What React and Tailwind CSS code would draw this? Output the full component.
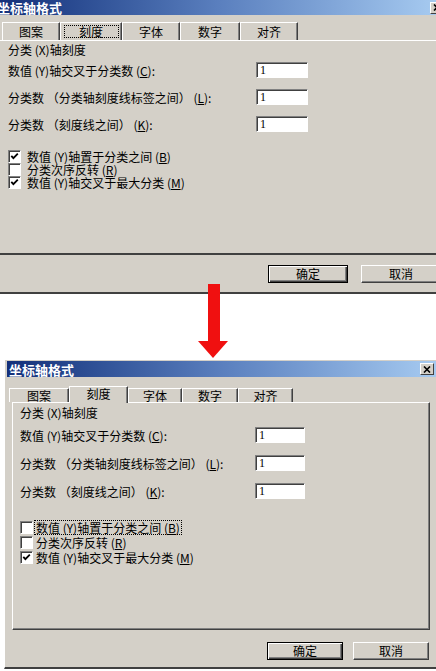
const CJK = "font-['Noto_Sans_CJK_SC',sans-serif]";

function Field({ w }) {
  return (
    <div
      className={`h-[16px] ${w} bg-white border border-t-[#808080] border-l-[#808080] border-b-white border-r-white shadow-[inset_1px_1px_0_#404040] pl-[3px] flex items-center font-['Liberation_Serif',serif] text-[12px] leading-none text-black`}
    >
      1
    </div>
  );
}

function Box({ checked }) {
  return (
    <span className="w-[13px] h-[13px] shrink-0 bg-white border border-t-[#808080] border-l-[#808080] border-b-white border-r-white shadow-[inset_1px_1px_0_#404040] flex items-center justify-center">
      {checked ? (
        <svg width="9" height="9" viewBox="0 0 9 9">
          <path d="M1.3 3.8 L3.4 6.2 L7.8 1.6" stroke="#000" strokeWidth="1.8" fill="none" />
        </svg>
      ) : null}
    </span>
  );
}

function Btn({ children, def, w }) {
  return (
    <div
      className={`h-[18px] ${w} flex items-center justify-center text-[12px] leading-none text-black ${
        def
          ? "border border-black shadow-[inset_1px_1px_0_#fff,inset_-1px_-1px_0_#404040,inset_-2px_-2px_0_#808080]"
          : "border border-t-white border-l-white border-b-[#404040] border-r-[#404040] shadow-[inset_-1px_-1px_0_#808080]"
      }`}
    >
      {children}
    </div>
  );
}

function Close({ extra }) {
  return (
    <div
      className={`w-[14px] h-[12px] shrink-0 bg-[#d4d0c8] border border-t-white border-l-white border-b-[#404040] border-r-[#404040] flex items-center justify-center ${extra}`}
    >
      <svg width="8" height="7" viewBox="0 0 8 7">
        <path d="M1 0.5 L7 6.5 M7 0.5 L1 6.5" stroke="#000" strokeWidth="1.6" />
      </svg>
    </div>
  );
}

// mnemonic label, e.g. 分类次序反转 (R)
function Label({ text, k, colon }) {
  return (
    <span className="inline-block whitespace-nowrap leading-[13px]">
      {text} (<u>{k}</u>){colon ? ":" : ""}
    </span>
  );
}

const rows = [
  ["数值 (Y)轴交叉于分类数", "C"],
  ["分类数 （分类轴刻度线标签之间）", "L"],
  ["分类数 （刻度线之间）", "K"],
];

const topTabs = [
  ["图案", "w-[58px]"],
  ["刻度", "w-[62px]"],
  ["字体", "w-[58px]"],
  ["数字", "w-[60px]"],
  ["对齐", "w-[58px]"],
];

const botTabs = [
  ["图案", "w-[60px]"],
  ["刻度", "w-[59px]"],
  ["字体", "w-[54px]"],
  ["数字", "w-[56px]"],
  ["对齐", "w-[55px]"],
];

function TopDialog() {
  return (
    <div className="h-[294px] bg-[#d4d0c8] flex flex-col overflow-hidden border-b-2 border-b-[#404040]">
      <div className="h-[15px] shrink-0 bg-gradient-to-r from-[#14307a] via-[#5a7fbe] to-[#a6caf0] flex items-center justify-between">
        <span className="-ml-[3px] text-white font-bold text-[13px] leading-none">坐标轴格式</span>
        <Close extra="-mr-[8px]" />
      </div>
      <div className="mt-[7px] h-[18px] flex pl-[2px]">
        {topTabs.map(([t, w], i) => (
          <div
            key={t}
            className={`${w} h-[18px] border-t border-l border-t-white border-l-white border-r border-r-[#404040] shadow-[inset_-1px_0_0_#808080] flex items-center justify-center text-[12px] leading-none`}
          >
            {i === 1 ? (
              <span className="w-[55px] h-[13px] border border-dotted border-black flex items-center justify-center">{t}</span>
            ) : (
              t
            )}
          </div>
        ))}
      </div>
      <div className="h-[215px] shrink-0 border-t border-t-white border-b-2 border-b-[#404040] pl-[8px] text-[12px] text-black">
        <div className="mt-[2px] leading-[14px]">分类 (X)轴刻度</div>
        <div className="mt-[5px] grid grid-cols-[248px_52px] gap-y-[11px]">
          {rows.map(([t, k]) => (
            <div key={k} className="contents">
              <div className="h-[16px] flex items-center leading-none">
                <Label text={t} k={k} colon />
              </div>
              <Field w="w-[52px]" />
            </div>
          ))}
        </div>
        <div className="mt-[18px] flex flex-col">
          <div className="h-[13px] flex items-center gap-[6px] leading-none">
            <Box checked />
            <Label text="数值 (Y)轴置于分类之间" k="B" />
          </div>
          <div className="h-[13px] flex items-center gap-[6px] leading-none">
            <Box />
            <Label text="分类次序反转" k="R" />
          </div>
          <div className="h-[13px] flex items-center gap-[6px] leading-none">
            <Box checked />
            <Label text="数值 (Y)轴交叉于最大分类" k="M" />
          </div>
        </div>
      </div>
      <div className="mt-[10px] flex pl-[268px] gap-[13px]">
        <Btn def w="w-[80px] shrink-0">确定</Btn>
        <Btn w="w-[80px] shrink-0">取消</Btn>
      </div>
    </div>
  );
}

function BottomDialog() {
  return (
    <div className="mt-[66px] ml-[4px] h-[309px] bg-[#d4d0c8] border-l border-l-white border-b-2 border-b-[#404040] pl-[2px] pt-[1px] flex flex-col overflow-hidden">
      <div className="h-[16px] shrink-0 bg-gradient-to-r from-[#14307a] via-[#5a7fbe] to-[#a6caf0] flex items-center justify-between pl-[2px] pr-[2px]">
        <span className="text-white font-bold text-[13px] leading-none">坐标轴格式</span>
        <Close extra="" />
      </div>
      <div className="relative z-10 mt-[9px] h-[17px] flex items-end pl-[2px]">
        {botTabs.map(([t, w], i) =>
          i === 1 ? (
            <div
              key={t}
              className={`${w} h-[17px] bg-[#d4d0c8] border-t border-l border-t-white border-l-white border-r border-r-[#404040] shadow-[inset_-1px_0_0_#808080] flex items-center justify-center text-[12px] leading-none pb-[2px]`}
            >
              {t}
            </div>
          ) : (
            <div
              key={t}
              className={`${w} h-[14px] mb-[1px] bg-[#d4d0c8] border-t border-l border-t-white border-l-white border-r border-r-[#404040] shadow-[inset_-1px_0_0_#808080] flex items-center justify-center text-[12px] leading-none`}
            >
              {t}
            </div>
          )
        )}
      </div>
      <div className="-mt-[1px] ml-[5px] mr-[6px] h-[228px] shrink-0 border border-t-white border-l-white border-r-[#404040] border-b-[#404040] shadow-[inset_-1px_-1px_0_#808080] pl-[7px] text-[12px] text-black">
        <div className="mt-[3px] leading-[14px]">分类 (X)轴刻度</div>
        <div className="mt-[7px] grid grid-cols-[235px_50px] gap-y-[12px]">
          {rows.map(([t, k]) => (
            <div key={k} className="contents">
              <div className="h-[16px] flex items-center leading-none">
                <Label text={t} k={k} colon />
              </div>
              <Field w="w-[50px]" />
            </div>
          ))}
        </div>
        <div className="mt-[21px] flex flex-col">
          <div className="h-[15px] flex items-center gap-[1px] leading-none">
            <Box />
            <span className="border border-dotted border-black px-[1px]">
              <Label text="数值 (Y)轴置于分类之间" k="B" />
            </span>
          </div>
          <div className="h-[15px] flex items-center gap-[3px] leading-none">
            <Box />
            <Label text="分类次序反转" k="R" />
          </div>
          <div className="h-[15px] flex items-center gap-[3px] leading-none">
            <Box checked />
            <Label text="数值 (Y)轴交叉于最大分类" k="M" />
          </div>
        </div>
      </div>
      <div className="mt-[12px] flex pl-[260px] gap-[10px]">
        <Btn def w="w-[76px] shrink-0">确定</Btn>
        <Btn w="w-[76px] shrink-0">取消</Btn>
      </div>
    </div>
  );
}

export default function App() {
  return (
    <div className={`relative w-[436px] h-[671px] bg-white overflow-hidden text-black ${CJK}`}>
      <TopDialog />
      <BottomDialog />
      <svg className="absolute left-[198px] top-[284px]" width="30" height="75" viewBox="0 0 30 75">
        <rect x="10" y="0" width="12" height="58" fill="#f01010" />
        <polygon points="0,57 30,57 15,74" fill="#f01010" />
      </svg>
    </div>
  );
}
